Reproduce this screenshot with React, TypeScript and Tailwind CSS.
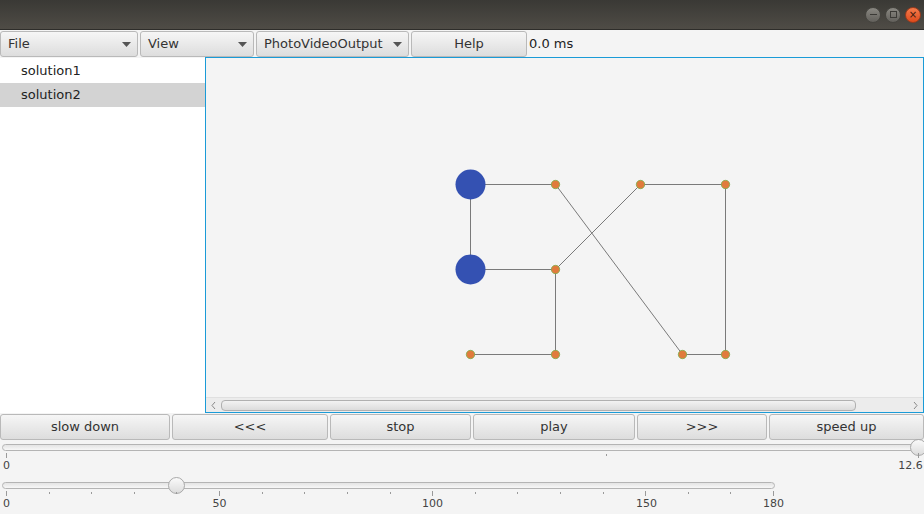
import React from "react";

const font = { fontFamily: '"DejaVu Sans", "Liberation Sans", sans-serif' };

function MenuButton({ label, w }: { label: string; w: string }) {
  return (
    <div
      className={`${w} h-[26px] flex items-center justify-between pl-[7px] pr-[6px] rounded-[3px] border border-[#b9b9b9] bg-gradient-to-b from-[#f6f6f6] to-[#dddddd] text-[13px] text-[#333]`}
    >
      <span>{label}</span>
      <svg width="9" height="5" viewBox="0 0 9 5">
        <path d="M0 0 L9 0 L4.5 5 Z" fill="#555" />
      </svg>
    </div>
  );
}

function Btn({ label, w }: { label: string; w: string }) {
  return (
    <div
      className={`${w} h-[26px] flex items-center justify-center rounded-[3px] border border-[#b9b9b9] bg-gradient-to-b from-[#f6f6f6] to-[#dddddd] text-[13px] text-[#333]`}
    >
      {label}
    </div>
  );
}

const nodesBig = [
  [471, 184],
  [471, 269],
];
const nodesSmall = [
  [556, 184],
  [556, 269],
  [641, 184],
  [726, 184],
  [471, 354],
  [556, 354],
  [683, 354],
  [726, 354],
];
const edges = [
  [471, 184, 556, 184],
  [471, 184, 471, 269],
  [471, 269, 556, 269],
  [556, 184, 683, 354],
  [556, 269, 641, 184],
  [641, 184, 726, 184],
  [726, 184, 726, 354],
  [683, 354, 726, 354],
  [556, 269, 556, 354],
  [471, 354, 556, 354],
];

function Graph() {
  // pane content origin in page coordinates
  const ox = 207;
  const oy = 58;
  return (
    <svg width="716" height="339" className="block">
      {edges.map(([a, b, c, d], i) => (
        <line
          key={i}
          x1={a - ox + 0.5}
          y1={b - oy + 0.5}
          x2={c - ox + 0.5}
          y2={d - oy + 0.5}
          stroke="#7a7a7a"
          strokeWidth="1"
        />
      ))}
      {nodesBig.map(([x, y], i) => (
        <circle key={i} cx={x - ox + 0.5} cy={y - oy + 0.5} r="15" fill="#3451b2" />
      ))}
      {nodesSmall.map(([x, y], i) => (
        <circle key={i} cx={x - ox + 0.5} cy={y - oy + 0.5} r="4.2" fill="#e07b3c" stroke="#7cae4a" strokeWidth="0.8" />
      ))}
    </svg>
  );
}

function Slider({
  trackW,
  thumbX,
  ticks,
  labels,
}: {
  trackW: number;
  thumbX: number;
  ticks: { x: number; major: boolean }[];
  labels: { x: number; t: string }[];
}) {
  return (
    <div className="relative h-[38px] shrink-0">
      <div
        className="absolute top-[4px] left-[2px] h-[7px] rounded-full border border-[#b4b4b4] bg-gradient-to-b from-[#e4e4e4] to-[#f7f7f7]"
        style={{ width: trackW }}
      />
      <div
        className="absolute top-[-1px] w-[17px] h-[17px] rounded-full border border-[#a9a9a9] bg-gradient-to-b from-[#fafafa] to-[#dcdcdc]"
        style={{ left: thumbX - 8 }}
      />
      {ticks.map((t, i) => (
        <div
          key={i}
          className={`absolute w-px bg-[#9a9a9a] ${t.major ? "top-[13px] h-[5px]" : "top-[14px] h-[2px]"}`}
          style={{ left: t.x }}
        />
      ))}
      {labels.map((l, i) => (
        <div
          key={i}
          className="absolute top-[18px] text-[11px] text-[#444] -translate-x-1/2"
          style={{ left: l.x + 0.5 }}
        >
          {l.t}
        </div>
      ))}
    </div>
  );
}

export default function App() {
  const ticks2: { x: number; major: boolean }[] = [];
  for (let i = 0; i <= 18; i++) {
    const v = i * 10;
    ticks2.push({ x: Math.round(6 + (v / 180) * 767), major: v % 50 === 0 || v === 180 });
  }
  return (
    <div className="w-[924px] h-[514px] overflow-hidden flex flex-col bg-[#f4f4f4]" style={font}>
      {/* title bar */}
      <div className="h-[30px] shrink-0 bg-gradient-to-b from-[#3a3935] to-[#4f4c46] flex items-center justify-end pr-[3px] gap-[4px] border-b border-[#2e2d2a]">
        <div className="w-[16px] h-[16px] rounded-full bg-gradient-to-b from-[#8a8882] to-[#62605b] border border-[#45443f] flex items-center justify-center">
          <div className="w-[7px] h-[1.5px] bg-[#3b3a36]" />
        </div>
        <div className="w-[16px] h-[16px] rounded-full bg-gradient-to-b from-[#8a8882] to-[#62605b] border border-[#45443f] flex items-center justify-center">
          <div className="w-[7px] h-[7px] border border-[#3b3a36]" />
        </div>
        <div className="w-[16px] h-[16px] rounded-full bg-gradient-to-b from-[#f47a4a] to-[#de4a1a] border border-[#9a3b1c] flex items-center justify-center text-[10px] leading-none text-[#3b1a0e]">
          ×
        </div>
      </div>

      {/* menu bar */}
      <div className="h-[27px] shrink-0 flex items-start gap-[2px] bg-[#f4f4f4] pt-[1px]">
        <MenuButton label="File" w="w-[138px]" />
        <MenuButton label="View" w="w-[114px]" />
        <MenuButton label="PhotoVideoOutput" w="w-[153px]" />
        <Btn label="Help" w="w-[116px]" />
        <span className="h-[26px] flex items-center text-[13px] text-[#222]">0.0 ms</span>
      </div>

      {/* main */}
      <div className="h-[356px] shrink-0 flex">
        <div className="w-[205px] bg-white flex flex-col text-[13px] text-[#222] pt-px mt-px">
          <div className="h-[24px] pl-[21px] flex items-center">solution1</div>
          <div className="h-[24px] pl-[21px] flex items-center bg-[#d3d3d3]">solution2</div>
        </div>
        <div className="flex-1 border border-[#1a9bd7] bg-[#f4f4f4] flex flex-col">
          <div className="flex-1">
            <Graph />
          </div>
          <div className="h-[15px] flex items-center bg-[#ececec] border-t border-[#e0e0e0]">
            <svg width="15" height="13" viewBox="0 0 15 13">
              <path d="M9 3 L6 6.5 L9 10" fill="none" stroke="#888" strokeWidth="1" />
            </svg>
            <div className="flex-1 h-[11px] rounded-[4px] border border-[#b0b0b0] bg-gradient-to-b from-[#f2f2f2] to-[#dcdcdc] mr-[52px]" />
            <svg width="15" height="13" viewBox="0 0 15 13">
              <path d="M6 3 L9 6.5 L6 10" fill="none" stroke="#888" strokeWidth="1" />
            </svg>
          </div>
        </div>
      </div>

      {/* controls */}
      <div className="flex shrink-0 gap-[2px] pt-[1px]">
        <Btn label="slow down" w="w-[170px]" />
        <Btn label="<<<" w="w-[156px]" />
        <Btn label="stop" w="w-[141px]" />
        <Btn label="play" w="w-[162px]" />
        <Btn label=">>>" w="w-[130px]" />
        <Btn label="speed up" w="w-[155px]" />
      </div>

      <div className="shrink-0">
        <Slider
          trackW={920}
          thumbX={918}
          ticks={[
            { x: 6, major: true },
            { x: 606, major: false },
            { x: 918, major: true },
          ]}
          labels={[
            { x: 6, t: "0" },
            { x: 910, t: "12.6" },
          ]}
        />
        <Slider
          trackW={773}
          thumbX={176}
          ticks={ticks2}
          labels={[
            { x: 6, t: "0" },
            { x: 219, t: "50" },
            { x: 432, t: "100" },
            { x: 646, t: "150" },
            { x: 773, t: "180" },
          ]}
        />
      </div>
    </div>
  );
}
